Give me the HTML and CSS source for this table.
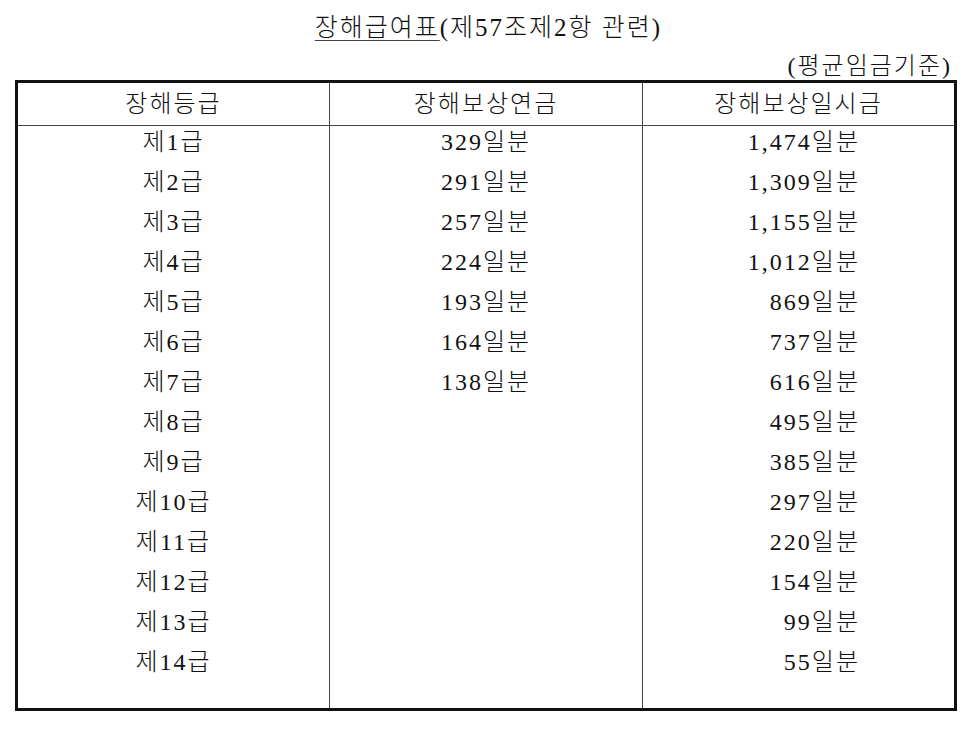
FILE: index.html
```html
<!DOCTYPE html>
<html lang="ko">
<head>
<meta charset="utf-8">
<title>장해급여표</title>
<link rel="stylesheet" href="styles.css">
</head>
<body>
<div class="page">
  <div class="title"><span class="ul">장해급여표</span>(제57조제2항 관련)</div>
  <div class="sub">(평균임금기준)</div>
  <div class="table">
    <div class="head c1">장해등급</div>
    <div class="head c2">장해보상연금</div>
    <div class="head c3">장해보상일시금</div>
    <div class="col c1">
      <div class="row">제1급</div>
      <div class="row">제2급</div>
      <div class="row">제3급</div>
      <div class="row">제4급</div>
      <div class="row">제5급</div>
      <div class="row">제6급</div>
      <div class="row">제7급</div>
      <div class="row">제8급</div>
      <div class="row">제9급</div>
      <div class="row">제10급</div>
      <div class="row">제11급</div>
      <div class="row">제12급</div>
      <div class="row">제13급</div>
      <div class="row">제14급</div>
    </div>
    <div class="col c2">
      <div class="row">329일분</div>
      <div class="row">291일분</div>
      <div class="row">257일분</div>
      <div class="row">224일분</div>
      <div class="row">193일분</div>
      <div class="row">164일분</div>
      <div class="row">138일분</div>
    </div>
    <div class="col c3 right">
      <div class="row">1,474일분</div>
      <div class="row">1,309일분</div>
      <div class="row">1,155일분</div>
      <div class="row">1,012일분</div>
      <div class="row">869일분</div>
      <div class="row">737일분</div>
      <div class="row">616일분</div>
      <div class="row">495일분</div>
      <div class="row">385일분</div>
      <div class="row">297일분</div>
      <div class="row">220일분</div>
      <div class="row">154일분</div>
      <div class="row">99일분</div>
      <div class="row">55일분</div>
    </div>
  </div>
</div>
</body>
</html>
```
FILE: styles.css
```css
html, body {
  margin: 0;
  padding: 0;
  background: #fff;
}
.page {
  width: 977px;
  height: 729px;
  font-family: "Liberation Serif", "Noto Sans CJK KR", serif;
  font-weight: 300;
  color: #111;
  font-size: 24px;
  letter-spacing: 2px;
}
.title {
  padding-top: 12px;
  height: 32px;
  line-height: 32px;
  font-size: 25px;
  text-align: center;
}
.ul {
  text-decoration: underline;
  text-decoration-color: #444;
  text-decoration-thickness: 1px;
  text-underline-offset: 4px;
}
.sub {
  margin-top: 8px;
  height: 28px;
  line-height: 28px;
  text-align: right;
  padding-right: 25px;
}
.table {
  margin-left: 15px;
  width: 936px;
  height: 625px;
  border: 3px solid #111;
  display: grid;
  grid-template-columns: 311px 312px 311px;
  grid-template-rows: 42px 1fr;
  column-gap: 1px;
  row-gap: 1px;
  background: #444;
}
.head {
  background: #fff;
  line-height: 42px;
  text-align: center;
}
.col {
  background: #fff;
  text-align: center;
}
.row {
  height: 40px;
  line-height: 32px;
}
.right {
  text-align: right;
  padding-right: 94px;
}
```
